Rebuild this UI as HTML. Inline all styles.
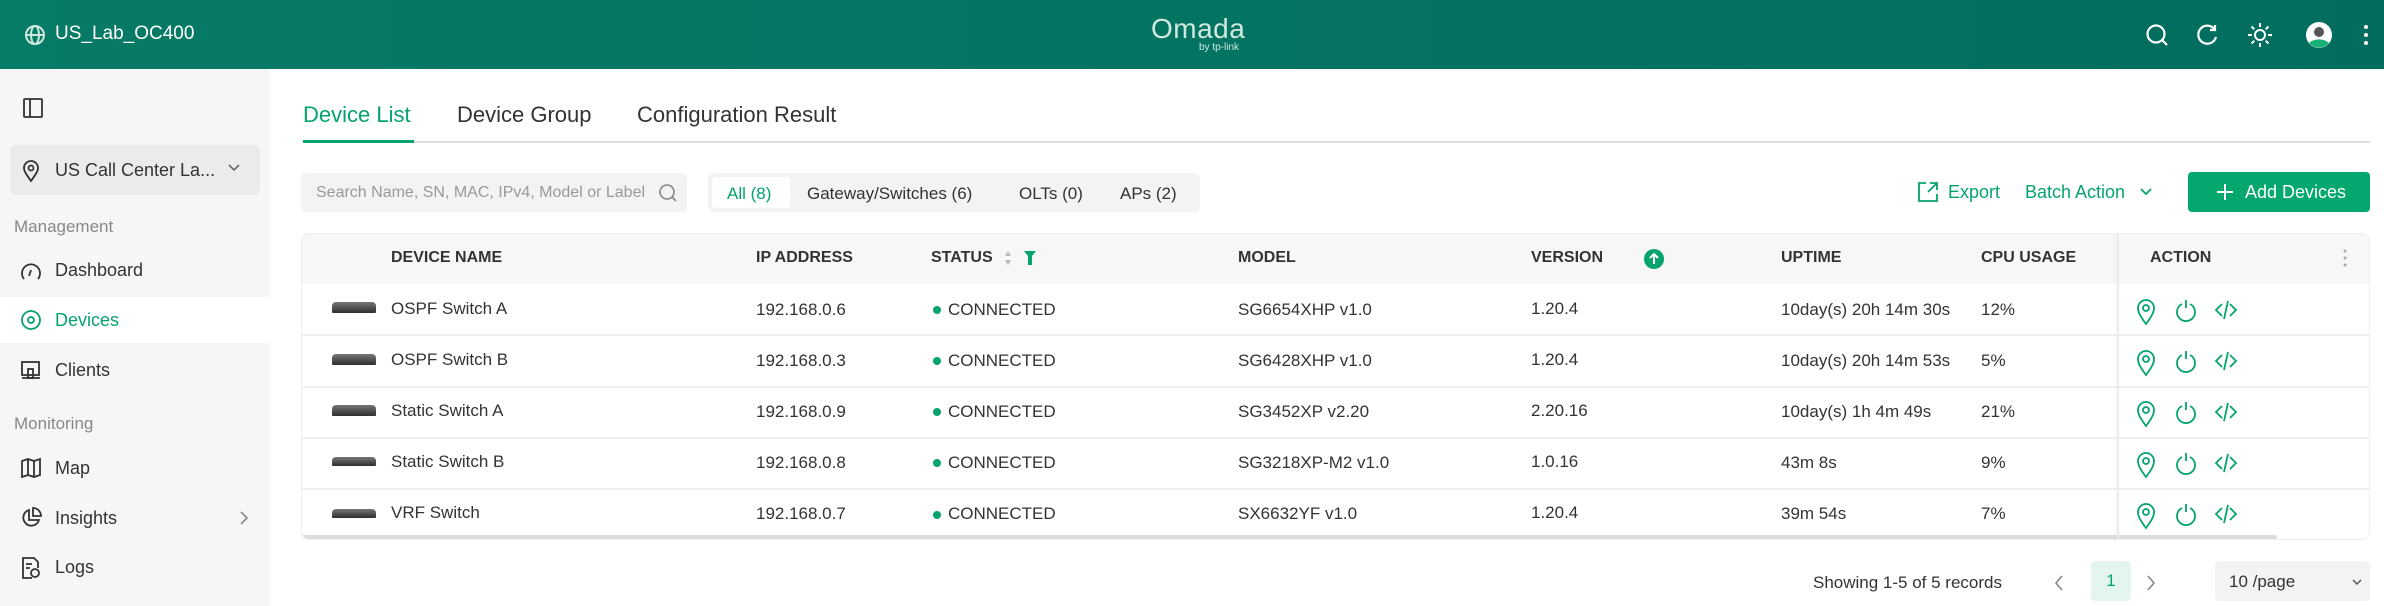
<!DOCTYPE html>
<html><head><meta charset="utf-8"><style>
*{margin:0;padding:0;box-sizing:border-box}
body{width:2384px;height:606px;overflow:hidden;background:#fff;font-family:"Liberation Sans",sans-serif;color:#333;position:relative}
.a{position:absolute;white-space:nowrap}
.hdr{left:0;top:0;width:2384px;height:69px;background:linear-gradient(90deg,#067b65,#026d5f)}
.side{left:0;top:69px;width:270px;height:537px;background:#f6f6f6}
.nav{font-size:18px;color:#333}
.sec{font-size:17px;color:#888}
.th{font-size:16px;font-weight:bold;color:#333;top:249px}
.td{font-size:17px;color:#333}
.g{color:#04a46c}
svg{position:absolute}
</style></head><body>
<div class="a hdr"></div>
<svg style="left:24px;top:24px" width="22" height="22" viewBox="0 0 22 22" fill="none" stroke="#cfe8df" stroke-width="2"><circle cx="11" cy="11" r="9"/><ellipse cx="11" cy="11" rx="4" ry="9"/><path d="M2 11h18"/></svg>
<div class="a" style="left:55px;top:23px;font-size:19px;color:#fff">US_Lab_OC400</div>
<div class="a" style="left:1151px;top:13px;font-size:28px;color:#cfe9df;letter-spacing:0.5px">Omada</div>
<div class="a" style="left:1199px;top:42px;font-size:10px;color:#cfe9df">by tp-link</div>
<svg style="left:2144px;top:22px" width="26" height="26" viewBox="0 0 26 26" fill="none" stroke="#fff" stroke-width="2.2"><circle cx="12" cy="12" r="8.5"/><path d="M18 18l5 5"/></svg>
<svg style="left:2195px;top:22px" width="26" height="26" viewBox="0 0 26 26" fill="none" stroke="#fff" stroke-width="2.2"><path d="M20 8A9 9 0 1 0 21 15"/><path d="M20 3v5h-5"/></svg>
<svg style="left:2246px;top:21px" width="28" height="28" viewBox="0 0 28 28" fill="none" stroke="#fff" stroke-width="2"><circle cx="14" cy="14" r="5"/><path d="M14 2v4M14 22v4M2 14h4M22 14h4M5.5 5.5l2.8 2.8M19.7 19.7l2.8 2.8M5.5 22.5l2.8-2.8M19.7 8.3l2.8-2.8"/></svg>
<svg style="left:2306px;top:22px" width="26" height="26" viewBox="0 0 26 26"><circle cx="13" cy="13" r="13" fill="#fff"/><circle cx="13" cy="10" r="5" fill="#555"/><path d="M3 21a12 8 0 0 1 20 0a13 13 0 0 1-20 0z" fill="#19b07a"/></svg>
<svg style="left:2362px;top:24px" width="8" height="22" viewBox="0 0 8 22" fill="#fff"><circle cx="4" cy="3" r="2"/><circle cx="4" cy="11" r="2"/><circle cx="4" cy="19" r="2"/></svg>

<div class="a side"></div>
<svg style="left:22px;top:97px" width="22" height="22" viewBox="0 0 22 22" fill="none" stroke="#333" stroke-width="1.8"><rect x="2" y="2" width="18" height="18" rx="1"/><path d="M8 2v18"/></svg>
<div class="a" style="left:10px;top:145px;width:250px;height:50px;background:#ebebeb;border-radius:6px"></div>
<svg style="left:22px;top:159px" width="18" height="24" viewBox="0 0 18 24" fill="none" stroke="#333" stroke-width="1.8"><path d="M9 22C4 15 2 12 2 9a7 7 0 0 1 14 0c0 3-2 6-7 13z"/><circle cx="9" cy="9" r="2.5"/></svg>
<div class="a nav" style="left:55px;top:160px">US Call Center La...</div>
<svg style="left:228px;top:164px" width="12" height="8" viewBox="0 0 12 8" fill="none" stroke="#666" stroke-width="1.6"><path d="M1 1l5 5 5-5"/></svg>
<div class="a sec" style="left:14px;top:217px">Management</div>
<svg style="left:20px;top:259px" width="22" height="22" viewBox="0 0 22 22" fill="none" stroke="#333" stroke-width="1.8"><path d="M4 20A9 9 0 1 1 18 20"/><path d="M11 11l-2 6"/></svg>
<div class="a nav" style="left:55px;top:260px">Dashboard</div>
<div class="a" style="left:0;top:297px;width:270px;height:46px;background:#fff"></div>
<svg style="left:20px;top:309px" width="22" height="22" viewBox="0 0 22 22" fill="none" stroke="#04a46c" stroke-width="1.8"><circle cx="11" cy="11" r="9"/><circle cx="11" cy="11" r="3"/></svg>
<div class="a nav g" style="left:55px;top:310px">Devices</div>
<svg style="left:20px;top:359px" width="22" height="22" viewBox="0 0 22 22" fill="none" stroke="#333" stroke-width="1.8"><rect x="2" y="3" width="17" height="13"/><path d="M2 19h18"/><rect x="8" y="10" width="5" height="9"/></svg>
<div class="a nav" style="left:55px;top:360px">Clients</div>
<div class="a sec" style="left:14px;top:414px">Monitoring</div>
<svg style="left:20px;top:457px" width="22" height="22" viewBox="0 0 22 22" fill="none" stroke="#333" stroke-width="1.8"><path d="M2 4l6-2 6 2 6-2v16l-6 2-6-2-6 2z"/><path d="M8 2v16M14 4v16"/></svg>
<div class="a nav" style="left:55px;top:458px">Map</div>
<svg style="left:20px;top:507px" width="22" height="22" viewBox="0 0 22 22" fill="none" stroke="#333" stroke-width="1.8"><path d="M9 3a8 8 0 1 0 10 10H9z"/><path d="M13 1v8h8a8 8 0 0 0-8-8z"/></svg>
<div class="a nav" style="left:55px;top:508px">Insights</div>
<svg style="left:240px;top:511px" width="8" height="14" viewBox="0 0 8 14" fill="none" stroke="#888" stroke-width="1.6"><path d="M1 1l6 6-6 6"/></svg>
<svg style="left:20px;top:556px" width="22" height="24" viewBox="0 0 22 24" fill="none" stroke="#333" stroke-width="1.8"><path d="M12 22H3V2h11l4 4v6"/><circle cx="15" cy="17" r="4"/><path d="M6 8h6M6 12h4"/></svg>
<div class="a nav" style="left:55px;top:557px">Logs</div>

<div class="a" style="left:303px;top:102px;font-size:22px;color:#04a46c">Device List</div>
<div class="a" style="left:457px;top:102px;font-size:22px;color:#333">Device Group</div>
<div class="a" style="left:637px;top:102px;font-size:22px;color:#333">Configuration Result</div>
<div class="a" style="left:303px;top:141px;width:2067px;height:2px;background:#ddd"></div>
<div class="a" style="left:303px;top:140px;width:111px;height:3px;background:#04a46c"></div>

<div class="a" style="left:301px;top:173px;width:386px;height:39px;background:#f3f3f3;border-radius:5px"></div>
<div class="a" style="left:316px;top:184px;font-size:16px;color:#999;width:335px;overflow:hidden">Search Name, SN, MAC, IPv4, Model or Label</div>
<svg style="left:658px;top:183px" width="20" height="20" viewBox="0 0 20 20" fill="none" stroke="#888" stroke-width="1.6"><circle cx="9" cy="9" r="7"/><path d="M14 14l4 4"/></svg>
<div class="a" style="left:708px;top:173px;width:492px;height:39px;background:#f3f3f3;border-radius:5px"></div>
<div class="a" style="left:712px;top:177px;width:78px;height:31px;background:#fff;border-radius:4px"></div>
<div class="a g" style="left:727px;top:184px;font-size:17px">All (8)</div>
<div class="a" style="left:807px;top:184px;font-size:17px">Gateway/Switches (6)</div>
<div class="a" style="left:1019px;top:184px;font-size:17px">OLTs (0)</div>
<div class="a" style="left:1120px;top:184px;font-size:17px">APs (2)</div>

<svg style="left:1917px;top:181px" width="22" height="22" viewBox="0 0 22 22" fill="none" stroke="#04a46c" stroke-width="1.8"><path d="M9 2H2v18h18v-7"/><path d="M13 2h7v7M20 2l-9 9"/></svg>
<div class="a g" style="left:1948px;top:182px;font-size:18px">Export</div>
<div class="a g" style="left:2025px;top:182px;font-size:18px">Batch Action</div>
<svg style="left:2140px;top:188px" width="12" height="8" viewBox="0 0 12 8" fill="none" stroke="#04a46c" stroke-width="1.8"><path d="M1 1l5 5 5-5"/></svg>
<div class="a" style="left:2188px;top:172px;width:182px;height:40px;background:#04a86e;border-radius:4px"></div>
<svg style="left:2216px;top:183px" width="18" height="18" viewBox="0 0 18 18" stroke="#fff" stroke-width="2"><path d="M9 1v16M1 9h16"/></svg>
<div class="a" style="left:2245px;top:182px;font-size:18px;color:#fff">Add Devices</div>

<div class="a" style="left:301px;top:233px;width:2069px;height:307px;border:1px solid #eee;border-radius:8px;overflow:hidden">
 <div class="a" style="left:0;top:0;width:2069px;height:50px;background:#f7f7f7"></div>
 <div class="a" style="left:0;top:100px;width:2069px;height:2px;background:#f0f0f0"></div>
 <div class="a" style="left:0;top:152px;width:2069px;height:2px;background:#f0f0f0"></div>
 <div class="a" style="left:0;top:203px;width:2069px;height:2px;background:#f0f0f0"></div>
 <div class="a" style="left:0;top:254px;width:2069px;height:2px;background:#f0f0f0"></div>
 <div class="a" style="left:0;top:301px;width:1975px;height:5px;background:#ddd;border-radius:3px"></div>
 <div class="a" style="left:1815px;top:0;width:2px;height:307px;background:#eaeaea;box-shadow:-2px 0 4px rgba(0,0,0,0.05)"></div>
</div>
<div class="a th" style="left:391px">DEVICE NAME</div>
<div class="a th" style="left:756px">IP ADDRESS</div>
<div class="a th" style="left:931px">STATUS</div>
<svg style="left:1004px;top:250px" width="8" height="16" viewBox="0 0 8 16" fill="#bbb"><path d="M4 1l3 5H1zM4 15l3-5H1z"/></svg>
<svg style="left:1024px;top:250px" width="12" height="16" viewBox="0 0 12 16" fill="#04a46c"><path d="M0 1h12L8 6v9H4V6z"/></svg>
<div class="a th" style="left:1238px">MODEL</div>
<div class="a th" style="left:1531px">VERSION</div>
<svg style="left:1643px;top:248px" width="22" height="22" viewBox="0 0 22 22"><circle cx="11" cy="11" r="10" fill="#04a46c"/><path d="M11 16V6M7 10l4-4 4 4" stroke="#fff" stroke-width="2" fill="none"/></svg>
<div class="a th" style="left:1781px">UPTIME</div>
<div class="a th" style="left:1981px">CPU USAGE</div>
<div class="a th" style="left:2150px">ACTION</div>
<svg style="left:2342px;top:248px" width="6" height="20" viewBox="0 0 6 20" fill="#aaa"><circle cx="3" cy="3" r="1.5"/><circle cx="3" cy="10" r="1.5"/><circle cx="3" cy="17" r="1.5"/></svg>

<div class="a" style="left:332px;top:302px;width:44px;height:11px;background:linear-gradient(#777,#2f2f2f);border-radius:4px 4px 1px 1px"></div>
<div class="a" style="left:332px;top:354px;width:44px;height:11px;background:linear-gradient(#777,#2f2f2f);border-radius:4px 4px 1px 1px"></div>
<div class="a" style="left:332px;top:405px;width:44px;height:11px;background:linear-gradient(#777,#2f2f2f);border-radius:4px 4px 1px 1px"></div>
<div class="a" style="left:332px;top:457px;width:44px;height:9px;background:linear-gradient(#777,#2f2f2f);border-radius:4px 4px 1px 1px"></div>
<div class="a" style="left:332px;top:509px;width:44px;height:9px;background:linear-gradient(#777,#2f2f2f);border-radius:4px 4px 1px 1px"></div>

<div class="a td" style="left:391px;top:299px">OSPF Switch A</div><div class="a td" style="left:756px;top:300px">192.168.0.6</div><div class="a td" style="left:948px;top:300px">CONNECTED</div><div class="a td" style="left:1238px;top:300px">SG6654XHP v1.0</div><div class="a td" style="left:1531px;top:299px">1.20.4</div><div class="a td" style="left:1781px;top:300px">10day(s) 20h 14m 30s</div><div class="a td" style="left:1981px;top:300px">12%</div>
<div class="a td" style="left:391px;top:350px">OSPF Switch B</div><div class="a td" style="left:756px;top:351px">192.168.0.3</div><div class="a td" style="left:948px;top:351px">CONNECTED</div><div class="a td" style="left:1238px;top:351px">SG6428XHP v1.0</div><div class="a td" style="left:1531px;top:350px">1.20.4</div><div class="a td" style="left:1781px;top:351px">10day(s) 20h 14m 53s</div><div class="a td" style="left:1981px;top:351px">5%</div>
<div class="a td" style="left:391px;top:401px">Static Switch A</div><div class="a td" style="left:756px;top:402px">192.168.0.9</div><div class="a td" style="left:948px;top:402px">CONNECTED</div><div class="a td" style="left:1238px;top:402px">SG3452XP v2.20</div><div class="a td" style="left:1531px;top:401px">2.20.16</div><div class="a td" style="left:1781px;top:402px">10day(s) 1h 4m 49s</div><div class="a td" style="left:1981px;top:402px">21%</div>
<div class="a td" style="left:391px;top:452px">Static Switch B</div><div class="a td" style="left:756px;top:453px">192.168.0.8</div><div class="a td" style="left:948px;top:453px">CONNECTED</div><div class="a td" style="left:1238px;top:453px">SG3218XP-M2 v1.0</div><div class="a td" style="left:1531px;top:452px">1.0.16</div><div class="a td" style="left:1781px;top:453px">43m 8s</div><div class="a td" style="left:1981px;top:453px">9%</div>
<div class="a td" style="left:391px;top:503px">VRF Switch</div><div class="a td" style="left:756px;top:504px">192.168.0.7</div><div class="a td" style="left:948px;top:504px">CONNECTED</div><div class="a td" style="left:1238px;top:504px">SX6632YF v1.0</div><div class="a td" style="left:1531px;top:503px">1.20.4</div><div class="a td" style="left:1781px;top:504px">39m 54s</div><div class="a td" style="left:1981px;top:504px">7%</div>

<svg style="left:0;top:0" width="2384" height="606">
<defs>
<g id="act" fill="none" stroke="#04a46c" stroke-width="1.8">
<path d="M0 20C-6 12-8 8-8 4a8 8 0 0 1 16 0c0 4-2 8-8 16z" transform="translate(0,-8)"/><circle cx="0" cy="-4" r="3"/>
<path d="M36-8a9 9 0 1 0 8 0" /><path d="M40-12v8"/>
<path d="M76-8l-6 6 6 6M84-8l6 6-6 6M82-11l-4 18"/>
</g>
</defs>
<g fill="#04a46c"><circle cx="937" cy="310" r="4"/><circle cx="937" cy="361" r="4"/><circle cx="937" cy="412" r="4"/><circle cx="937" cy="463" r="4"/><circle cx="937" cy="515" r="4"/></g>
<use href="#act" x="2146" y="312"/><use href="#act" x="2146" y="363"/><use href="#act" x="2146" y="414"/><use href="#act" x="2146" y="465"/><use href="#act" x="2146" y="516"/>
</svg>

<div class="a" style="left:1813px;top:573px;font-size:17px">Showing 1-5 of 5 records</div>
<svg style="left:2054px;top:575px" width="10" height="16" viewBox="0 0 10 16" fill="none" stroke="#888" stroke-width="1.6"><path d="M8 1L2 8l6 7"/></svg>
<div class="a" style="left:2091px;top:561px;width:40px;height:40px;background:#e3f5ee;border-radius:4px;color:#04a46c;font-size:17px;text-align:center;line-height:40px">1</div>
<svg style="left:2146px;top:575px" width="10" height="16" viewBox="0 0 10 16" fill="none" stroke="#888" stroke-width="1.6"><path d="M2 1l6 7-6 7"/></svg>
<div class="a" style="left:2215px;top:561px;width:155px;height:40px;background:#f3f3f3;border-radius:4px"></div>
<div class="a" style="left:2229px;top:572px;font-size:17px">10 /page</div>
<svg style="left:2352px;top:579px" width="10" height="7" viewBox="0 0 10 7" fill="none" stroke="#555" stroke-width="1.5"><path d="M1 1l4 4 4-4"/></svg>
</body></html>
